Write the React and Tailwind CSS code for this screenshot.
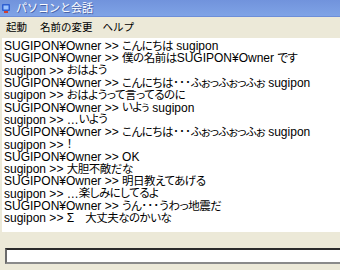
import React from 'react';

const lines = [
  'SUGIPON¥Owner >> こんにちは sugipon',
  'SUGIPON¥Owner >> 僕の名前はSUGIPON¥Owner です',
  'sugipon >> おはよう',
  'SUGIPON¥Owner >> こんにちは･･･ふぉっふぉっふぉ sugipon',
  'sugipon >> おはようって言ってるのに',
  'SUGIPON¥Owner >> いよぅ sugipon',
  'sugipon >> …いよう',
  'SUGIPON¥Owner >> こんにちは･･･ふぉっふぉっふぉ sugipon',
  'sugipon >> ！',
  'SUGIPON¥Owner >> OK',
  'sugipon >> 大胆不敵だな',
  'SUGIPON¥Owner >> 明日教えてあげる',
  'sugipon >> …楽しみにしてるよ',
  'SUGIPON¥Owner >> うん･･･うわっ地震だ',
  'sugipon >> Σ　大丈夫なのかいな',
];

// CJK runs: proportional kana (palt), like MS UI Gothic
const cjk = /([\u3000-\u30ff\u4e00-\u9fff\uff01-\uff60]+)/;

function Line({ text }) {
  return (
    <div className="h-[12.3px] flex items-center whitespace-pre">
      {text.split(cjk).map((part, i) =>
        cjk.test(part) ? (
          <span key={i} className="inline-block text-[11.5px] leading-[11px] tracking-[-0.5px] [font-feature-settings:'palt']">{part}</span>
        ) : (
          <span key={i} className="inline-block leading-[12px]">{part}</span>
        )
      )}
    </div>
  );
}

function AppIcon() {
  return (
    <svg width="10" height="11" viewBox="0 0 10 11">
      <rect x="1" y="1" width="8" height="7" rx="1" fill="#2f5fd0" />
      <rect x="2.5" y="2.5" width="5" height="4" fill="#9cc4ff" />
      <rect x="3" y="8" width="4" height="2" fill="#d04030" />
    </svg>
  );
}

export default function App() {
  return (
    <div
      className="w-[340px] h-[270px] overflow-hidden flex flex-col bg-[#ece9d8] text-black"
      style={{ fontFamily: '"Liberation Sans", "Noto Sans CJK JP", sans-serif' }}
    >
      {/* title bar */}
      <div className="h-[17px] shrink-0 flex items-center gap-[5px] pl-[1px] bg-gradient-to-b from-[#7193dc] to-[#7fa3e6] border-b border-[#6d8ed8]">
        <AppIcon />
        <span className="text-[11px] leading-none text-white [text-shadow:1px_1px_0_#4a64a8]">パソコンと会話</span>
      </div>

      {/* menu */}
      <div className="h-[21px] shrink-0 flex items-center text-[10.5px] leading-none pl-[6px]">
        <span className="shrink-0 mr-[13px]">起動</span>
        <span className="shrink-0 mr-[10px]">名前の変更</span>
        <span className="shrink-0">ヘルプ</span>
      </div>

      {/* chat log */}
      <div className="h-[194px] shrink-0 bg-white ml-[2px] pl-[2px] pt-[2px] text-[12px]">
        {lines.map((l, i) => (
          <Line key={i} text={l} />
        ))}
      </div>

      {/* input */}
      <div className="flex-1 pt-[16px] pl-[5px]">
        <div className="h-[16px] w-[340px] bg-white border-t-2 border-l-2 border-t-[#2b2b2b] border-l-[#6b6b6b] border-b-2 border-b-[#8a8a8a]" />
      </div>
    </div>
  );
}
